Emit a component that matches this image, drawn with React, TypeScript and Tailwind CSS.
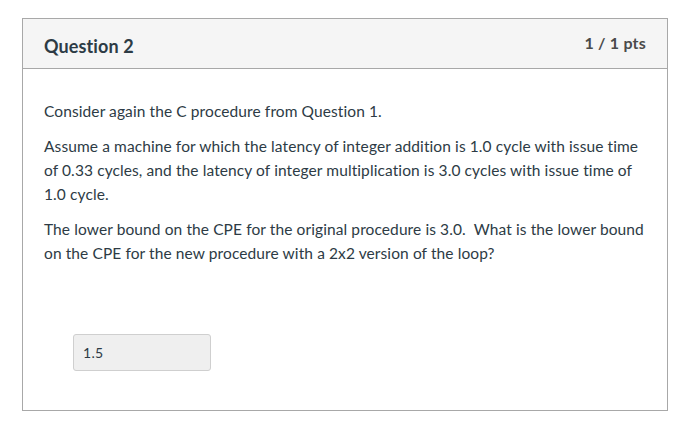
export default function App() {
  return (
    <div className="w-[690px] h-[434px] bg-white pt-[18px] pl-[22px] font-['Lato',sans-serif] text-[#2d3b45]">
      <div className="w-[646px] h-[393px] border border-[#a8a8a8] flex flex-col">
        <div className="h-[50px] bg-[#f5f5f5] border-b border-[#a8a8a8] flex items-center justify-between pl-[21px] pr-[21px]">
          <h2 className="mt-[6px] text-[18px] font-bold tracking-[0.1px]">Question 2</h2>
          <span className="-mt-[2px] text-[16px] font-bold tracking-[0.2px] text-[#4a4a4a]">1 / 1 pts</span>
        </div>
        <div className="pl-[21px] pr-[18px] pt-[30px] text-[15.5px] tracking-[0.1px] leading-[24px]">
          <p className="mb-[11px]">Consider again the C procedure from Question 1.</p>
          <p className="mb-[11px]">
            Assume a machine for which the latency of integer addition is 1.0 cycle with issue time of 0.33 cycles, and the latency of integer multiplication is 3.0 cycles with issue time of 1.0 cycle.
          </p>
          <p>
            The lower bound on the CPE for the original procedure is 3.0.&nbsp; What is the lower bound on the CPE for the new procedure with a 2x2 version of the loop?
          </p>
          <div className="mt-[69px] ml-[29px] w-[138px] h-[37px] bg-[#efefef] border border-[#cfcfcf] rounded-[3px] flex items-center px-[9px] text-[14px] tracking-[0.3px]">
            1.5
          </div>
        </div>
      </div>
    </div>
  );
}
